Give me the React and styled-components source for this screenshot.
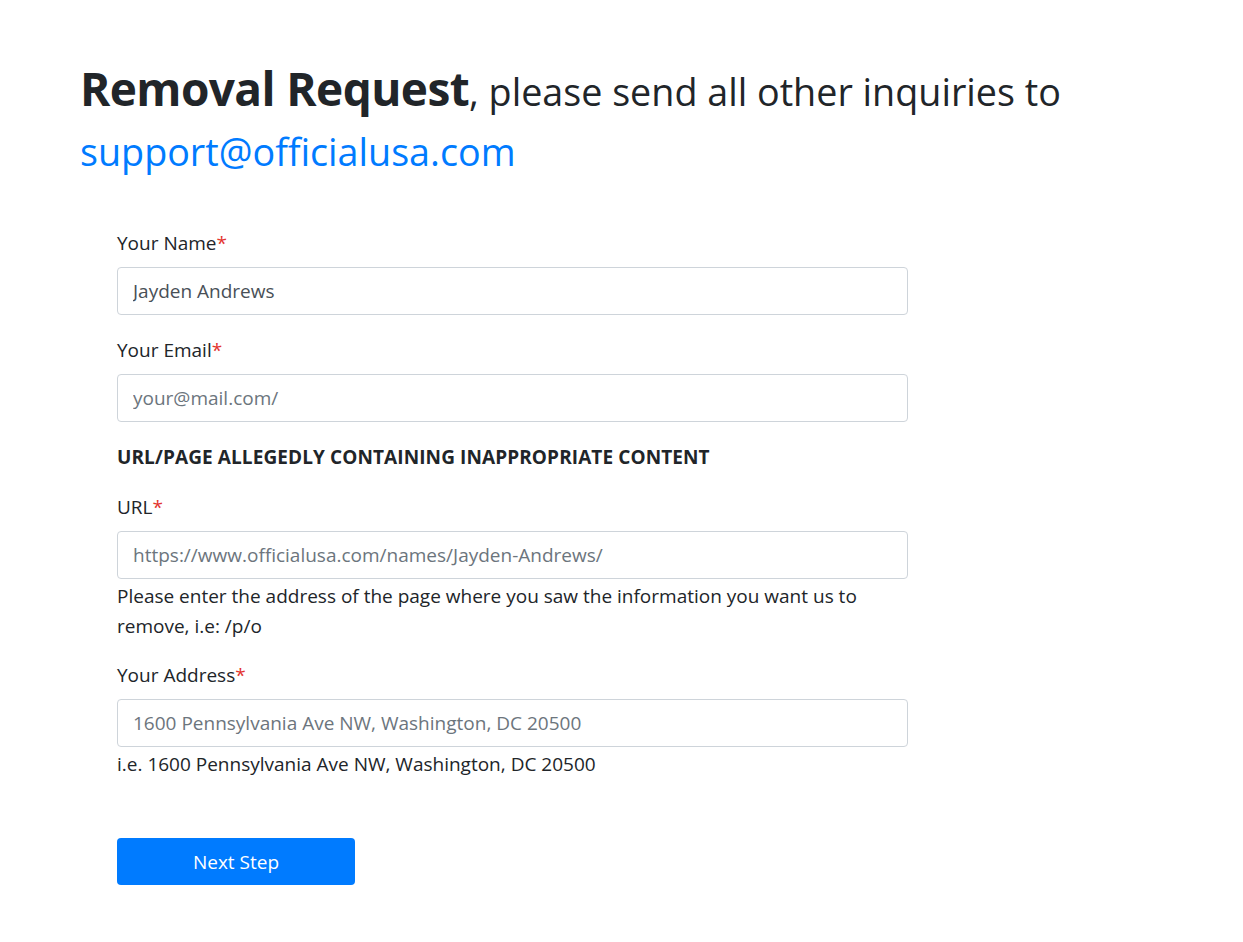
import React from "react";
import styled, { createGlobalStyle } from "styled-components";

const Global = createGlobalStyle`
  html, body { margin: 0; padding: 0; background: #fff; }
  body {
    font-family: "Open Sans", "Noto Sans", "Liberation Sans", sans-serif;
    color: #212529;
  }
  * { box-sizing: border-box; }
`;

const Page = styled.main`
  padding: 58px 0 60px 80px;
  width: 1163px;
`;

const Title = styled.h1`
  margin: 0 0 48px 0;
  font-size: 37.7px;
  line-height: 60px;
  font-weight: 400;
  color: #212529;
`;

const Strong = styled.strong`
  font-size: 46px;
  font-weight: 700;
  letter-spacing: -0.6px;
`;

const Mail = styled.a`
  color: #007bff;
  text-decoration: none;
`;

const Form = styled.form`
  margin-left: 37px;
  width: 791px;
  display: flex;
  flex-direction: column;
`;

const Group = styled.div`
  display: flex;
  flex-direction: column;
  margin-bottom: ${(p) => p.$mb ?? 22}px;
`;

const Label = styled.label`
  font-size: 19px;
  line-height: 27px;
  margin-bottom: 10px;
`;

const Req = styled.span`
  color: #e3342f;
`;

const Input = styled.input`
  width: 100%;
  height: 48px;
  padding: 0 15px;
  font-family: inherit;
  font-size: 19px;
  color: #495057;
  border: 1px solid #ced4da;
  border-radius: 4px;
  background: #fff;
  outline: none;
  &::placeholder { color: #6c757d; opacity: 1; }
`;

const Help = styled.p`
  margin: 2px 0 0 0;
  font-size: 19px;
  line-height: 30px;
  color: #212529;
`;

const Section = styled.h6`
  margin: 0 0 23px 0;
  font-size: 19px;
  line-height: 27px;
  font-weight: 700;
  letter-spacing: 0.1px;
  text-transform: uppercase;
`;

const Button = styled.button`
  width: 238px;
  height: 47px;
  border: none;
  border-radius: 4px;
  background: #007bff;
  color: #fff;
  font-family: inherit;
  font-size: 19px;
  cursor: pointer;
`;

export default function App() {
  return (
    <>
      <Global />
      <Page>
        <Title>
          <Strong>Removal Request</Strong>, please send all other inquiries to{" "}
          <Mail href="#">support@officialusa.com</Mail>
        </Title>
        <Form onSubmit={(e) => e.preventDefault()}>
          <Group>
            <Label>Your Name<Req>*</Req></Label>
            <Input defaultValue="Jayden Andrews" />
          </Group>
          <Group>
            <Label>Your Email<Req>*</Req></Label>
            <Input placeholder="your@mail.com/" />
          </Group>
          <Section>URL/PAGE ALLEGEDLY CONTAINING INAPPROPRIATE CONTENT</Section>
          <Group $mb={21}>
            <Label>URL<Req>*</Req></Label>
            <Input placeholder="https://www.officialusa.com/names/Jayden-Andrews/" />
            <Help>
              Please enter the address of the page where you saw the information you want us to remove, i.e: /p/o
            </Help>
          </Group>
          <Group $mb={59}>
            <Label>Your Address<Req>*</Req></Label>
            <Input placeholder="1600 Pennsylvania Ave NW, Washington, DC 20500" />
            <Help>i.e. 1600 Pennsylvania Ave NW, Washington, DC 20500</Help>
          </Group>
          <div>
            <Button type="submit">Next Step</Button>
          </div>
        </Form>
      </Page>
    </>
  );
}
